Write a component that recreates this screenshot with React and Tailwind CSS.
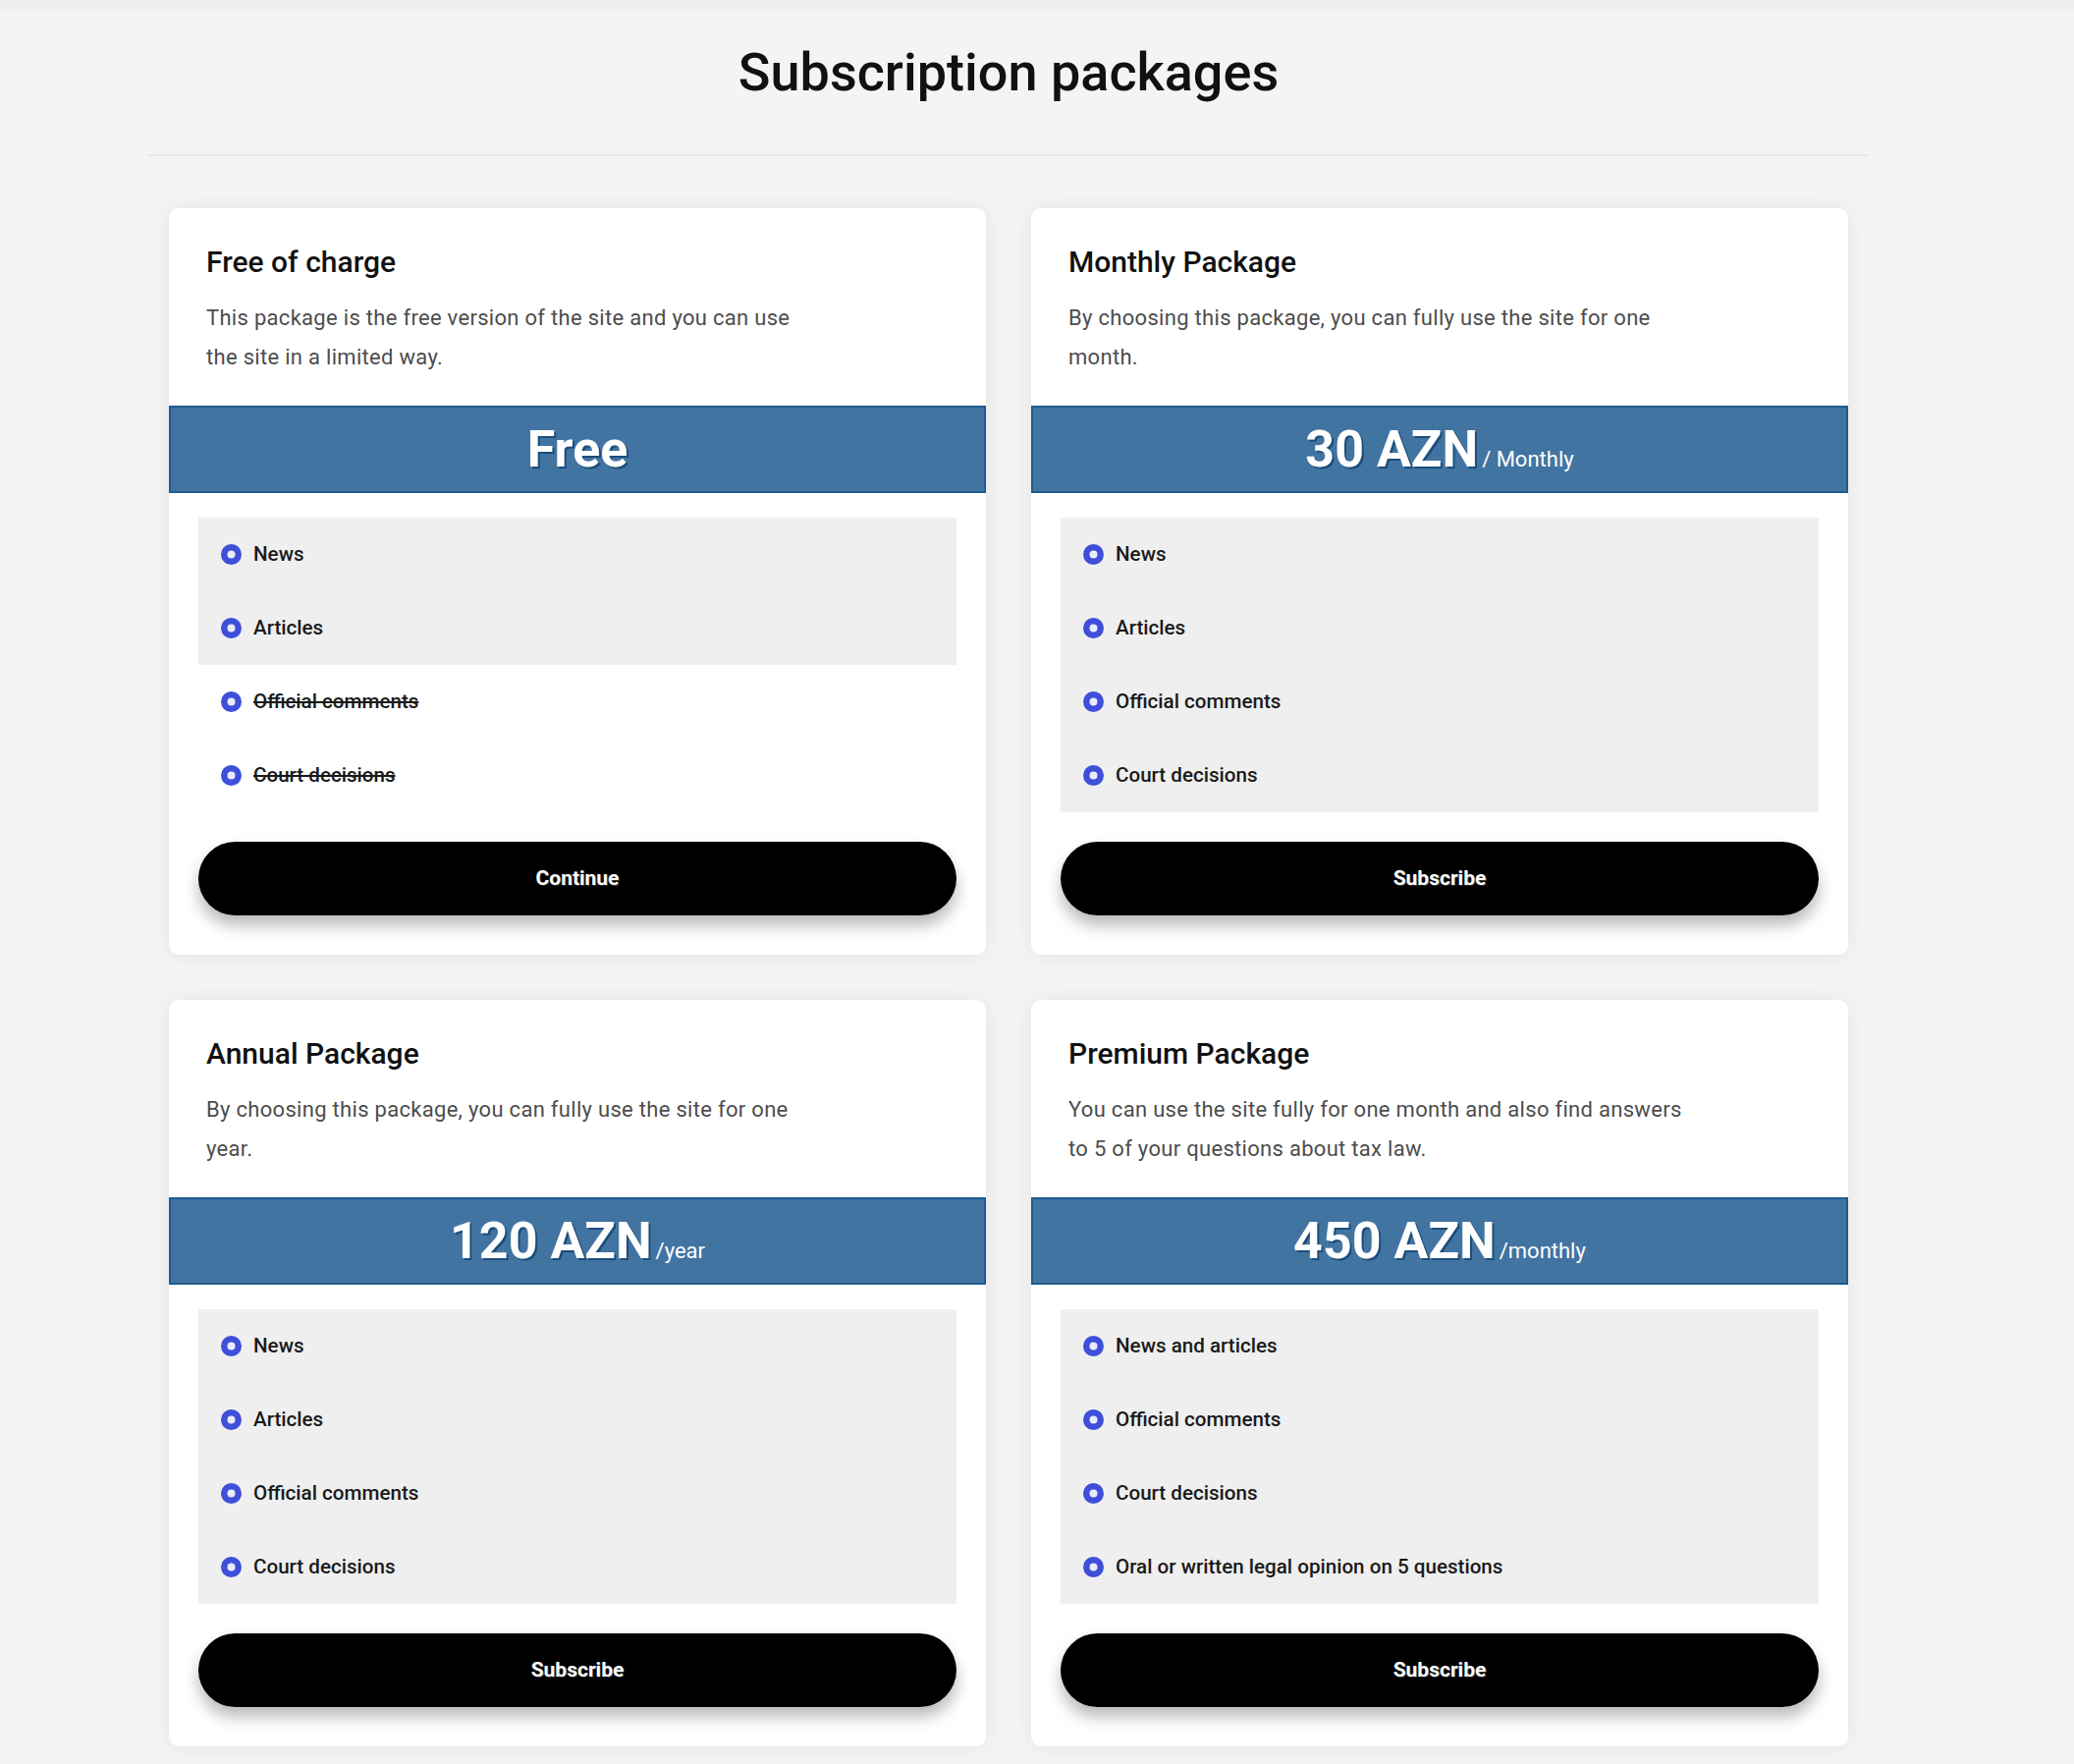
const packages = [
  {
    title: 'Free of charge',
    lines: ['This package is the free version of the site and you can use', 'the site in a limited way.'],
    price: 'Free',
    period: '',
    features: [
      { label: 'News', on: true },
      { label: 'Articles', on: true },
      { label: 'Official comments', on: false },
      { label: 'Court decisions', on: false },
    ],
    action: 'Continue',
  },
  {
    title: 'Monthly Package',
    lines: ['By choosing this package, you can fully use the site for one', 'month.'],
    price: '30 AZN',
    period: '/ Monthly',
    features: [
      { label: 'News', on: true },
      { label: 'Articles', on: true },
      { label: 'Official comments', on: true },
      { label: 'Court decisions', on: true },
    ],
    action: 'Subscribe',
  },
  {
    title: 'Annual Package',
    lines: ['By choosing this package, you can fully use the site for one', 'year.'],
    price: '120 AZN',
    period: '/year',
    features: [
      { label: 'News', on: true },
      { label: 'Articles', on: true },
      { label: 'Official comments', on: true },
      { label: 'Court decisions', on: true },
    ],
    action: 'Subscribe',
  },
  {
    title: 'Premium Package',
    lines: ['You can use the site fully for one month and also find answers', 'to 5 of your questions about tax law.'],
    price: '450 AZN',
    period: '/monthly',
    features: [
      { label: 'News and articles', on: true },
      { label: 'Official comments', on: true },
      { label: 'Court decisions', on: true },
      { label: 'Oral or written legal opinion on 5 questions', on: true },
    ],
    action: 'Subscribe',
  },
]

function Dot() {
  return (
    <svg width="21" height="21" viewBox="0 0 21 21" className="shrink-0">
      <circle cx="10.5" cy="10.5" r="10.5" fill="#3f4fd9" />
      <circle cx="10.5" cy="10.5" r="4" fill="#e9ebff" />
    </svg>
  )
}

function PackageCard({ pkg }) {
  return (
    <div className="flex flex-col overflow-hidden rounded-[10px] bg-white pb-[40px] shadow-[0_0_22px_rgba(0,0,0,0.07)]">
      <div className="px-[38px] pt-[38px] pb-[29px]">
        <h2 className="text-[30px] leading-[34px] font-medium text-[#111]">{pkg.title}</h2>
        <p className="mt-[20px] text-[22px] leading-[40px] tracking-[0.3px] text-[#4d4d4d]">
          {pkg.lines[0]}
          <br />
          {pkg.lines[1]}
        </p>
      </div>

      <div className="flex h-[89px] items-center justify-center border-2 border-[#1f5b8e] bg-[#4274a1] text-white">
        <div className="flex items-baseline">
          <span className="text-[52px] leading-none font-bold [text-shadow:2px_2px_0_#1b4d7a]">{pkg.price}</span>
          {pkg.period && <span className="ml-[4px] text-[22px] leading-none">{pkg.period}</span>}
        </div>
      </div>

      <ul className="mx-[30px] mt-[25px]">
        {pkg.features.map((f) => (
          <li
            key={f.label}
            className={`flex h-[75px] items-center gap-[12px] pl-[23px] ${f.on ? 'bg-[#efefef]' : 'bg-white'}`}
          >
            <Dot />
            <span className={`text-[20.6px] font-medium text-[#1a1a1a] ${f.on ? '' : 'line-through'}`}>{f.label}</span>
          </li>
        ))}
      </ul>

      <button
        type="button"
        className="mx-[30px] mt-[30px] h-[75px] rounded-full bg-black text-[21px] font-bold text-white shadow-[0_10px_16px_rgba(0,0,0,0.28)] [text-shadow:1px_1px_0_#333]"
      >
        {pkg.action}
      </button>
    </div>
  )
}

export default function App() {
  return (
    <div className="min-h-screen bg-[#f4f4f4] font-['Roboto',sans-serif]">
      <div className="h-[12px] bg-gradient-to-b from-[#ededed] to-[#f2f2f2]" />
      <div className="ml-[150px] w-[1754px] pb-[20px]">
        <h1 className="pt-[31px] text-center text-[54px] leading-[62px] font-medium text-[#111]">
          Subscription packages
        </h1>
        <div className="mt-[52px] h-[2px] bg-[#e8e8e8]" />
        <div className="mt-[53px] grid grid-cols-2 gap-[46px] px-[22px]">
          {packages.map((pkg) => (
            <PackageCard key={pkg.title} pkg={pkg} />
          ))}
        </div>
      </div>
    </div>
  )
}
